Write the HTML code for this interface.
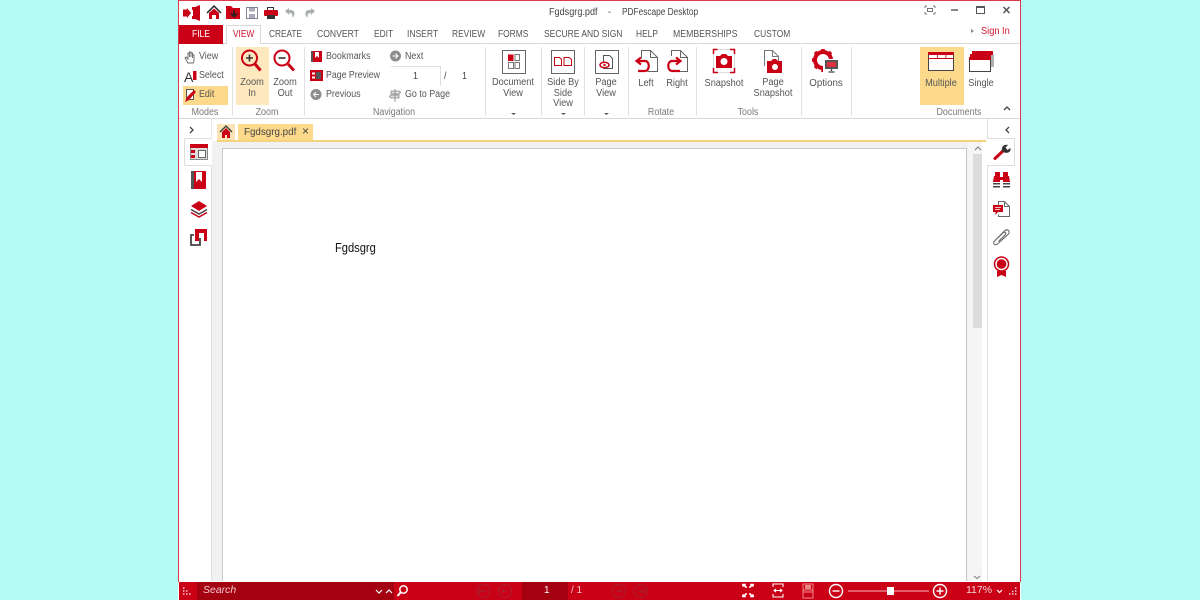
<!DOCTYPE html>
<html><head><meta charset="utf-8">
<style>
html,body{margin:0;padding:0;width:1200px;height:600px;overflow:hidden;background:#b4fbf6;font-family:"Liberation Sans",sans-serif}
#w{position:absolute;left:178px;top:0;width:843px;height:600px;background:#fff;overflow:hidden}
#f{position:absolute;left:178px;top:0;width:841px;height:581px;border:1px solid #dc3b4a;border-bottom:0;pointer-events:none}
.t{position:absolute;font-size:10px;line-height:11px;color:#555;white-space:nowrap;transform-origin:0 0;transform:scaleX(.89)}
.c{text-align:center;transform-origin:50% 0;transform:translateX(-50%) scaleX(.92)}
.m{position:absolute;font-size:10.5px;line-height:12px;color:#555;white-space:nowrap;top:28px;transform-origin:0 0;transform:scaleX(.81)}
.g{position:absolute;font-size:10px;line-height:11px;color:#777;white-space:nowrap;top:107px;transform-origin:50% 0;transform:translateX(-50%) scaleX(.89)}
.s{position:absolute;top:47px;width:1px;height:69px;background:#e2e2e2}
svg{position:absolute;left:0;top:0}
</style></head><body>
<div id="w"></div>
<div style="position:absolute;left:179px;top:43px;width:841px;height:1px;background:#d8d8d8"></div>
<div style="position:absolute;left:179px;top:118px;width:841px;height:1px;background:#d8d8d8"></div>
<div style="position:absolute;left:179px;top:25px;width:44px;height:19px;background:#c90016"></div>
<div style="position:absolute;left:226px;top:25px;width:35px;height:19px;background:#fff;border:1px solid #d8d8d8;border-bottom:0;box-sizing:border-box"></div>
<div class="m" style="left:192px;top:28px;color:#fff;">FILE</div>
<div class="m" style="left:233px;color:#d0142c;transform:scaleX(.79)">VIEW</div>
<div class="m" style="left:269px;transform:scaleX(.79)">CREATE</div>
<div class="m" style="left:317px;transform:scaleX(.82)">CONVERT</div>
<div class="m" style="left:374px;transform:scaleX(.8)">EDIT</div>
<div class="m" style="left:407px;transform:scaleX(.81)">INSERT</div>
<div class="m" style="left:452px;transform:scaleX(.8)">REVIEW</div>
<div class="m" style="left:498px;transform:scaleX(.8)">FORMS</div>
<div class="m" style="left:544px;transform:scaleX(.81)">SECURE AND SIGN</div>
<div class="m" style="left:636px;transform:scaleX(.8)">HELP</div>
<div class="m" style="left:673px;transform:scaleX(.83)">MEMBERSHIPS</div>
<div class="m" style="left:754px;transform:scaleX(.8)">CUSTOM</div>
<div class="t" style="left:549px;top:7px;color:#444;transform:scaleX(.91)">Fgdsgrg.pdf</div>
<div class="t" style="left:608px;top:7px;color:#444">-</div>
<div class="t" style="left:622px;top:7px;color:#444;transform:scaleX(.83)">PDFescape Desktop</div>
<div class="m" style="left:981px;top:25px;color:#d0142c;transform:scaleX(.88)">Sign In</div>

<div style="position:absolute;left:183px;top:86px;width:45px;height:19px;background:#fdd98c"></div>
<div style="position:absolute;left:236px;top:47px;width:33px;height:58px;background:#fee8bd"></div>
<div style="position:absolute;left:920px;top:47px;width:44px;height:58px;background:#fdd98c"></div>
<div class="s" style="left:232px"></div><div class="s" style="left:304px"></div><div class="s" style="left:485px"></div><div class="s" style="left:541px"></div><div class="s" style="left:584px"></div><div class="s" style="left:628px"></div><div class="s" style="left:696px"></div><div class="s" style="left:801px"></div><div class="s" style="left:851px"></div>

<div class="t" style="left:199px;top:51px">View</div>
<div class="t" style="left:199px;top:70px">Select</div>
<div class="t" style="left:199px;top:89px">Edit</div>
<div class="t c" style="left:252px;top:78px;line-height:10.5px">Zoom<br>In</div>
<div class="t c" style="left:285px;top:78px;line-height:10.5px">Zoom<br>Out</div>
<div class="t" style="left:326px;top:51px">Bookmarks</div>
<div class="t" style="left:326px;top:70px;transform:scaleX(.875)">Page Preview</div>
<div class="t" style="left:326px;top:89px">Previous</div>
<div class="t" style="left:405px;top:51px">Next</div>
<div class="t" style="left:405px;top:89px">Go to Page</div>
<div style="position:absolute;left:391px;top:66px;width:49px;height:19px;border-top:1px solid #ddd;border-right:1px solid #ddd"></div>
<div class="t" style="left:413px;top:71px;color:#444">1</div>
<div class="t" style="left:444px;top:71px;color:#444">/</div>
<div class="t" style="left:462px;top:71px;color:#444">1</div>
<div class="t c" style="left:513px;top:78px;line-height:10.5px">Document<br>View</div>
<div class="t c" style="left:563px;top:78px;line-height:10.5px">Side By<br>Side<br>View</div>
<div class="t c" style="left:606px;top:78px;line-height:10.5px">Page<br>View</div>
<div class="t c" style="left:646px;top:78px">Left</div>
<div class="t c" style="left:677px;top:78px">Right</div>
<div class="t c" style="left:724px;top:78px">Snapshot</div>
<div class="t c" style="left:773px;top:78px;line-height:10.5px">Page<br>Snapshot</div>
<div class="t c" style="left:826px;top:78px;transform:translateX(-50%) scaleX(.97)">Options</div>
<div class="t c" style="left:941px;top:78px">Multiple</div>
<div class="t c" style="left:981px;top:78px">Single</div>
<div class="g" style="left:205px">Modes</div><div class="g" style="left:267px">Zoom</div><div class="g" style="left:394px">Navigation</div><div class="g" style="left:661px">Rotate</div><div class="g" style="left:748px">Tools</div><div class="g" style="left:959px">Documents</div>

<!-- workspace -->
<div style="position:absolute;left:212px;top:141px;width:775px;height:440px;background:#f1f1f1"></div>
<div style="position:absolute;left:222px;top:148px;width:745px;height:433px;background:#fff;border:1px solid #c9c9c9;border-bottom:0;box-sizing:border-box"></div>
<div style="position:absolute;left:982px;top:141px;width:5px;height:440px;background:#fff"></div>
<div style="position:absolute;left:968px;top:141px;width:14px;height:440px;background:#f5f5f5"></div>
<div style="position:absolute;left:973px;top:154px;width:9px;height:174px;background:#dcdcdc"></div>
<div style="position:absolute;left:217px;top:140px;width:769px;height:2px;background:#f6d27f"></div>
<div style="position:absolute;left:217px;top:124px;width:18px;height:16px;background:#fbe5b6"></div>
<div style="position:absolute;left:238px;top:124px;width:75px;height:16px;background:#fdd98c"></div>
<div class="t" style="left:244px;top:127px;color:#444;transform:scaleX(.98)">Fgdsgrg.pdf</div>
<div class="t" style="left:302px;top:126px;color:#444;font-size:12px;transform:none">×</div>
<div style="position:absolute;left:184px;top:138px;width:28px;height:28px;background:#fff;border:1px solid #ddd;border-right:0;border-radius:2px;box-sizing:border-box"></div>
<div style="position:absolute;left:211px;top:119px;width:1px;height:19px;background:#e8e8e8"></div>
<div style="position:absolute;left:211px;top:166px;width:1px;height:415px;background:#e0e0e0"></div>
<div style="position:absolute;left:987px;top:119px;width:1px;height:462px;background:#e0e0e0"></div>
<div style="position:absolute;left:987px;top:138px;width:28px;height:28px;background:#fff;border:1px solid #ddd;border-left:0;box-sizing:border-box"></div>
<div style="position:absolute;left:335px;top:241px;font-size:12.5px;line-height:15px;color:#111;transform-origin:0 0;transform:scaleX(.89)">Fgdsgrg</div>

<!-- status bar -->
<div style="position:absolute;left:179px;top:582px;width:841px;height:18px;background:#c90016"></div>
<div style="position:absolute;left:197px;top:582px;width:197px;height:18px;background:#a30010"></div>
<div style="position:absolute;left:522px;top:582px;width:46px;height:18px;background:#a30010"></div>
<div class="t" style="left:203px;top:585px;color:#f2c9cd;font-style:italic;font-size:10.5px;transform:none">Search</div>
<div class="t" style="left:544px;top:585px;color:#fff;transform:none">1</div>
<div class="t" style="left:571px;top:585px;color:#f3c5ca;transform:none">/ 1</div>
<div class="t" style="left:966px;top:585px;color:#f6d5d8;font-size:10.5px;transform:none">117%</div>

<svg width="1200" height="600" viewBox="0 0 1200 600" fill="none">
<!-- quick access -->
<path d="M192 7h3l5-2v16l-5-2h-3v-3h1V10h-1z" fill="#c90016"/><rect x="193" y="7" width="3" height="12" fill="#c90016"/><path d="M183 9.500h4V8l4 5-4 5v-1.500h-4z" fill="#c90016"/>
<path d="M207 13l7-7 7 7" stroke="#222" stroke-width="1.500"/><path d="M209 13l5-4.500 5 4.500v6h-3v-4h-4v4h-3z" fill="#c90016"/>
<path d="M226 6h5l2 2h7v11h-14z" fill="#c90016"/><path d="M234 10v6m-3-2.500l3 3 3-3" stroke="#222" stroke-width="1.600"/>
<rect x="246.500" y="7.500" width="11" height="11" stroke="#7d8496" fill="#fff"/><rect x="249" y="8" width="6" height="3.500" fill="#aab"/><rect x="249" y="14" width="6" height="4" fill="#aab"/>
<path d="M267.500 10V7.500h6V10" stroke="#333"/><rect x="264" y="10" width="14" height="6" rx="1" fill="#c90016"/><rect x="267" y="15" width="8" height="4" fill="#333"/>
<path d="M285 11l4-3v2h2c4 0 5 5 1 8 1-3 0-5-3-5v2z" fill="#a9b1b1"/><path d="M315 11l-4-3v2h-2c-4 0-5 5-1 8-1-3 0-5 3-5v2z" fill="#a9b1b1"/>
<!-- window -->
<path d="M925 6h2M925 6v2M935 6h-2M935 6v2M925 14v-2M925 14h2M935 14h-2M935 14v-2" stroke="#777"/><rect x="927.500" y="8.500" width="5" height="3" stroke="#777"/>
<path d="M951 10h7" stroke="#555" stroke-width="1.400"/><rect x="976.500" y="6.500" width="8" height="7" stroke="#555"/><path d="M976 7h9" stroke="#555" stroke-width="2"/><path d="M1003.500 7l6 6m0-6l-6 6" stroke="#555" stroke-width="1.500"/>
<path d="M971 29l3 2-3 2z" fill="#888"/>
<path d="M1004 110l3-3 3 3" stroke="#444" stroke-width="1.300"/>
<!-- modes -->
<path d="M188 63l-3-5 1-1 2 2v-6h1.500v4-5h1.500v5-4h1.500v5-3h1.500v6l-1 2z" stroke="#666" fill="#fff" stroke-width=".9"/>
<text x="184" y="82" font-size="14" font-family="Liberation Sans" fill="#333">A</text><rect x="193" y="71" width="3.500" height="9" fill="#c90016"/>
<path d="M186.500 89.500h7v10h-7z" stroke="#555" fill="#fff"/><path d="M185 102l2-5 7-7 2 2-7 8z" fill="#c90016"/>
<!-- zoom -->
<circle cx="249.500" cy="58" r="7.500" stroke="#c90016" stroke-width="2"/><path d="M246 58h7M249.500 54.500v7" stroke="#333" stroke-width="1.600"/><path d="M255 64l5.500 6.500" stroke="#c90016" stroke-width="3"/>
<circle cx="282" cy="58" r="7.500" stroke="#c90016" stroke-width="2"/><path d="M278.500 58h7" stroke="#333" stroke-width="1.600"/><path d="M288 64l6 6.500" stroke="#c90016" stroke-width="3"/>
<!-- nav -->
<rect x="311" y="51" width="11" height="11" fill="#c90016"/><rect x="311" y="51" width="2" height="11" fill="#555"/><path d="M315 52h4v6l-2-2-2 2z" fill="#fff"/>
<rect x="310" y="70" width="13" height="11" fill="#c90016"/><rect x="312" y="72.500" width="3" height="2" fill="#fff"/><rect x="312" y="76.500" width="3" height="2" fill="#fff"/><rect x="316" y="72" width="5" height="7" fill="#555"/>
<circle cx="316" cy="94.500" r="5.500" fill="#8c8c8c"/><path d="M319 94.500h-5m2-2.500l-2.500 2.500 2.500 2.500" stroke="#fff"/>
<circle cx="395.500" cy="56" r="5.500" fill="#8c8c8c"/><path d="M392.500 56h5m-2-2.500l2.500 2.500-2.500 2.500" stroke="#fff"/>
<path d="M395 89v13M391 91h8l1.500 1.500-1.500 1.500h-8zM399 95h-8l-1.500 1.500 1.500 1.500h8z" stroke="#888" fill="#ddd" stroke-width=".8"/>
<!-- doc view etc -->
<rect x="502.500" y="50.500" width="23" height="23" stroke="#666" fill="#fff"/><rect x="508" y="54.500" width="5.500" height="6.500" fill="#c90016"/><rect x="515" y="54.500" width="4.500" height="6" stroke="#777"/><rect x="508.500" y="62.500" width="5" height="6" stroke="#777"/><rect x="515" y="62.500" width="4.500" height="6" stroke="#777"/>
<rect x="551.500" y="50.500" width="23" height="23" stroke="#666" fill="#fff"/><path d="M554.500 57.500h5l2 2v6h-7zM564 57.500h5l2.500 2v6H564z" stroke="#c90016"/>
<rect x="595.500" y="50.500" width="23" height="23" stroke="#666" fill="#fff"/><path d="M603.500 55.500h6l3 3v10h-9z" stroke="#555"/><ellipse cx="604.500" cy="65" rx="4.500" ry="2.700" fill="#fff" stroke="#c90016" stroke-width="1.500"/><circle cx="604.500" cy="65" r="1.200" fill="#c90016"/>
<path d="M511 113h5l-2.500 2zM561 113h5l-2.500 2zM604 113h5l-2.500 2z" fill="#555"/>
<!-- rotate -->
<path d="M641.500 58v-7.500h9l7 7v14h-10" stroke="#666" fill="#fff"/><path d="M650.500 50.500v7h7" stroke="#666"/>
<path d="M641 57.500l-4.500 3.500 4.500 3.500M637 61h8c5 0 5 10 0 10h-7" stroke="#c90016" stroke-width="2.200"/>
<path d="M671.500 56v-5.500h9l7 7v14h-12" stroke="#666" fill="#fff"/><path d="M680.500 50.500v7h7" stroke="#666"/>
<path d="M676 57.500l4.500 3.500-4.500 3.500M680 61h-8c-5 0-5 10 0 10h8" stroke="#c90016" stroke-width="2.200"/>
<!-- tools -->
<rect x="713.500" y="49.500" width="21" height="23" stroke="#ddd"/><path d="M713.500 54v-4.500h4M730 49.500h4.500V54M734.500 68v4.500H730M718 72.500h-4.500V68" stroke="#c90016" stroke-width="1.500"/><path d="M716 56h4l2-2h4l2 2h4v12h-16z" fill="#c90016"/><circle cx="724" cy="61.500" r="3.500" fill="#fff"/>
<path d="M764.500 66V50.500h8l6 6v5" stroke="#777" fill="#fff"/><path d="M772.500 50.500v6h6" stroke="#777"/><path d="M767 61h4l2-2h3l2 2h4v12h-15z" fill="#c90016"/><circle cx="775" cy="67" r="3" fill="#fff"/>
<circle cx="823" cy="60" r="8" stroke="#c90016" stroke-width="4"/><path d="M823 49v4M815 52l3 3M812 60h4M815 68l3-3M823 72v-4M831 52l-3 3" stroke="#c90016" stroke-width="3.500"/><rect x="823" y="59" width="16" height="15" fill="#fff"/><rect x="825" y="60" width="13" height="9" fill="#555"/><rect x="827" y="62" width="9" height="5" fill="#e03040"/><path d="M831.500 69v2M828.500 72h6" stroke="#444" stroke-width="1.300"/>
<!-- documents -->
<rect x="928.500" y="52.500" width="25" height="18" stroke="#444" fill="#fff"/><rect x="928" y="52" width="26" height="3" fill="#c90016"/><rect x="928" y="58" width="26" height="1" fill="#c90016"/><rect x="945.500" y="55" width=".8" height="3" fill="#c90016"/><rect x="937" y="55" width=".8" height="3" fill="#c90016"/>
<rect x="972" y="51" width="21" height="4" fill="#c90016"/><rect x="971" y="55" width="23" height="12" fill="#b0b0b0"/><rect x="970" y="54" width="21" height="3" fill="#c90016"/><rect x="969.500" y="58.500" width="21" height="13" stroke="#444" fill="#fff"/><rect x="969" y="57" width="22" height="3" fill="#c90016"/>
<!-- tabs bar -->
<path d="M190 127l3 3-3 3" stroke="#444" stroke-width="1.300"/>
<path d="M1009 127l-3 3 3 3" stroke="#444" stroke-width="1.300"/>
<path d="M220 132l6-6 6 6" stroke="#333" stroke-width="1.300"/><path d="M222 132l4-4 4 4v6h-3v-3h-2v3h-3z" fill="#c90016"/>
<!-- left icons -->
<rect x="190.500" y="144.500" width="17" height="15" fill="#ddd" stroke="#888"/><rect x="190" y="144" width="18" height="4" fill="#c90016"/><rect x="191" y="150" width="4" height="3" fill="#c90016"/><rect x="191" y="155" width="4" height="3" fill="#c90016"/><rect x="198.500" y="150.500" width="7" height="7" stroke="#666" fill="#fff"/>
<rect x="191" y="171" width="15" height="18" fill="#c90016"/><rect x="191" y="171" width="3" height="18" fill="#555"/><path d="M196 172h6v10l-3-3-3 3z" fill="#fff"/>
<path d="M199 201l8 5-8 5-8-5z" fill="#c90016"/><path d="M191 209.500l8 4.500 8-4.500" stroke="#444" stroke-width="1.500"/><path d="M191 212.500l8 4.500 8-4.500" stroke="#c90016" stroke-width="1.500"/>
<path d="M194 235h-3v10h9v-7" stroke="#444" stroke-width="1.800"/><path d="M195 229h12v12h-3v-8h-5v8h-4z" fill="#c90016"/>
<!-- right icons -->
<path d="M995 158.500l9-8.500" stroke="#c90016" stroke-width="3" stroke-linecap="round"/><path d="M1002 151c-1-4 2-7 6-6l-2.500 2.500 2 2.500 3-2c1 4-4 7-8.500 3z" fill="#333"/>
<path d="M995 172h5v4h-5zM1003 172h5v4h-5z" fill="#c90016"/><path d="M994 176h6v6h-7zM1003 176h6l1 6h-7z" fill="#c90016"/><rect x="1000" y="177" width="3" height="3" fill="#c90016"/><path d="M993 183h7v1.500h-7zM1003 183h7v1.500h-7zM993 186h7v1.500h-7zM1003 186h7v1.500h-7z" fill="#444"/>
<path d="M998.500 205v-3.500h6l5 5v10h-11v-2" stroke="#666" fill="#fff"/><path d="M1004.500 201.500v5h5" stroke="#666"/><path d="M993 205h10v7h-5l-2.500 3v-3H993z" fill="#c90016"/><path d="M995 207.500h6M995 209.500h5" stroke="#fff" stroke-width=".8"/>
<path d="M995.500 240l9-9c3-3 6 .5 4 3l-11 10c-3 2.500-5-1-3-3l9-8.500c1.500-1 3 .5 2 2l-7 7" stroke="#666" stroke-width="1.100"/>
<circle cx="1001.500" cy="264" r="7" fill="#fff" stroke="#c90016" stroke-width="1.500"/><circle cx="1001.500" cy="264" r="4.800" fill="#c90016"/><path d="M997 271v6l4.500-2 4.500 2v-6z" fill="#c90016"/>
<!-- scrollbar arrows -->
<path d="M975 150l3-3 3 3" stroke="#777"/><path d="M974 576l3 2.500 3-2.500" stroke="#777"/>
<!-- status icons -->
<path d="M183 588h1.500M183 591h1.500M183 594h1.500M186 591h1.500M186 594h1.500M189 594h1.500" stroke="#f4d0d4" stroke-width="1.500"/>
<path d="M1012 594h1.500M1015 594h1.500M1015 591h1.500M1012 591.500h1.500M1009 594h1.500M1015 588h1.500" stroke="#f4d0d4" stroke-width="1.500"/>
<path d="M376 590l3 3 3-3" stroke="#fff" stroke-width="1.200"/><path d="M386 593l3-3 3 3" stroke="#fff" stroke-width="1.200"/>
<circle cx="403.500" cy="589.500" r="3.700" stroke="#fff" stroke-width="1.500"/><path d="M401 592l-3.500 4" stroke="#fff" stroke-width="2"/>
<g stroke="#a82030"><circle cx="483.500" cy="591" r="6.500"/><path d="M487 591h-6m2-2l-2 2 2 2M479 588v6"/><circle cx="505" cy="591" r="6.500"/><path d="M508 591h-6m2-2l-2 2 2 2"/><circle cx="619" cy="591" r="6.500"/><path d="M616 591h6m-2-2l2 2-2 2"/><circle cx="640.500" cy="591" r="6.500"/><path d="M637 591h6m-2-2l2 2-2 2M645 588v6"/></g>
<path d="M742 584h4l-1 1 2 2-1 1-2-2-1 1zM754 584h-4l1 1-2 2 1 1 2-2 1 1zM742 597h4l-1-1 2-2-1-1-2 2-1-1zM754 597h-4l1-1-2-2 1-1 2 2 1-1z" fill="#fff" stroke="#fff" stroke-width=".5"/>
<path d="M773 587v-3h10v3M773 594v3h10v-3M775 590.500h6m-5-1.500l-2 1.500 2 1.500M780 589l2 1.500-2 1.500" stroke="#fff" stroke-width="1.100"/>
<path d="M803 584h10v14h-10z" stroke="#e88"/><path d="M803 590h10M803 592h10" stroke="#e88"/><rect x="805" y="585" width="6" height="4" fill="#e88"/>
<circle cx="836" cy="591" r="6.500" stroke="#fff" stroke-width="1.400"/><path d="M832.500 591h7" stroke="#fff" stroke-width="1.400"/>
<path d="M848 591h81" stroke="#f2b8be"/><rect x="887" y="587" width="7" height="8" fill="#fff"/>
<circle cx="940" cy="591" r="6.500" stroke="#fff" stroke-width="1.400"/><path d="M936.500 591h7M940 587.500v7" stroke="#fff" stroke-width="1.400"/>
<path d="M997 590l2.500 2.500 2.500-2.500" stroke="#fff" stroke-width="1.200"/>
</svg>
<div id="f"></div>
</body></html>
